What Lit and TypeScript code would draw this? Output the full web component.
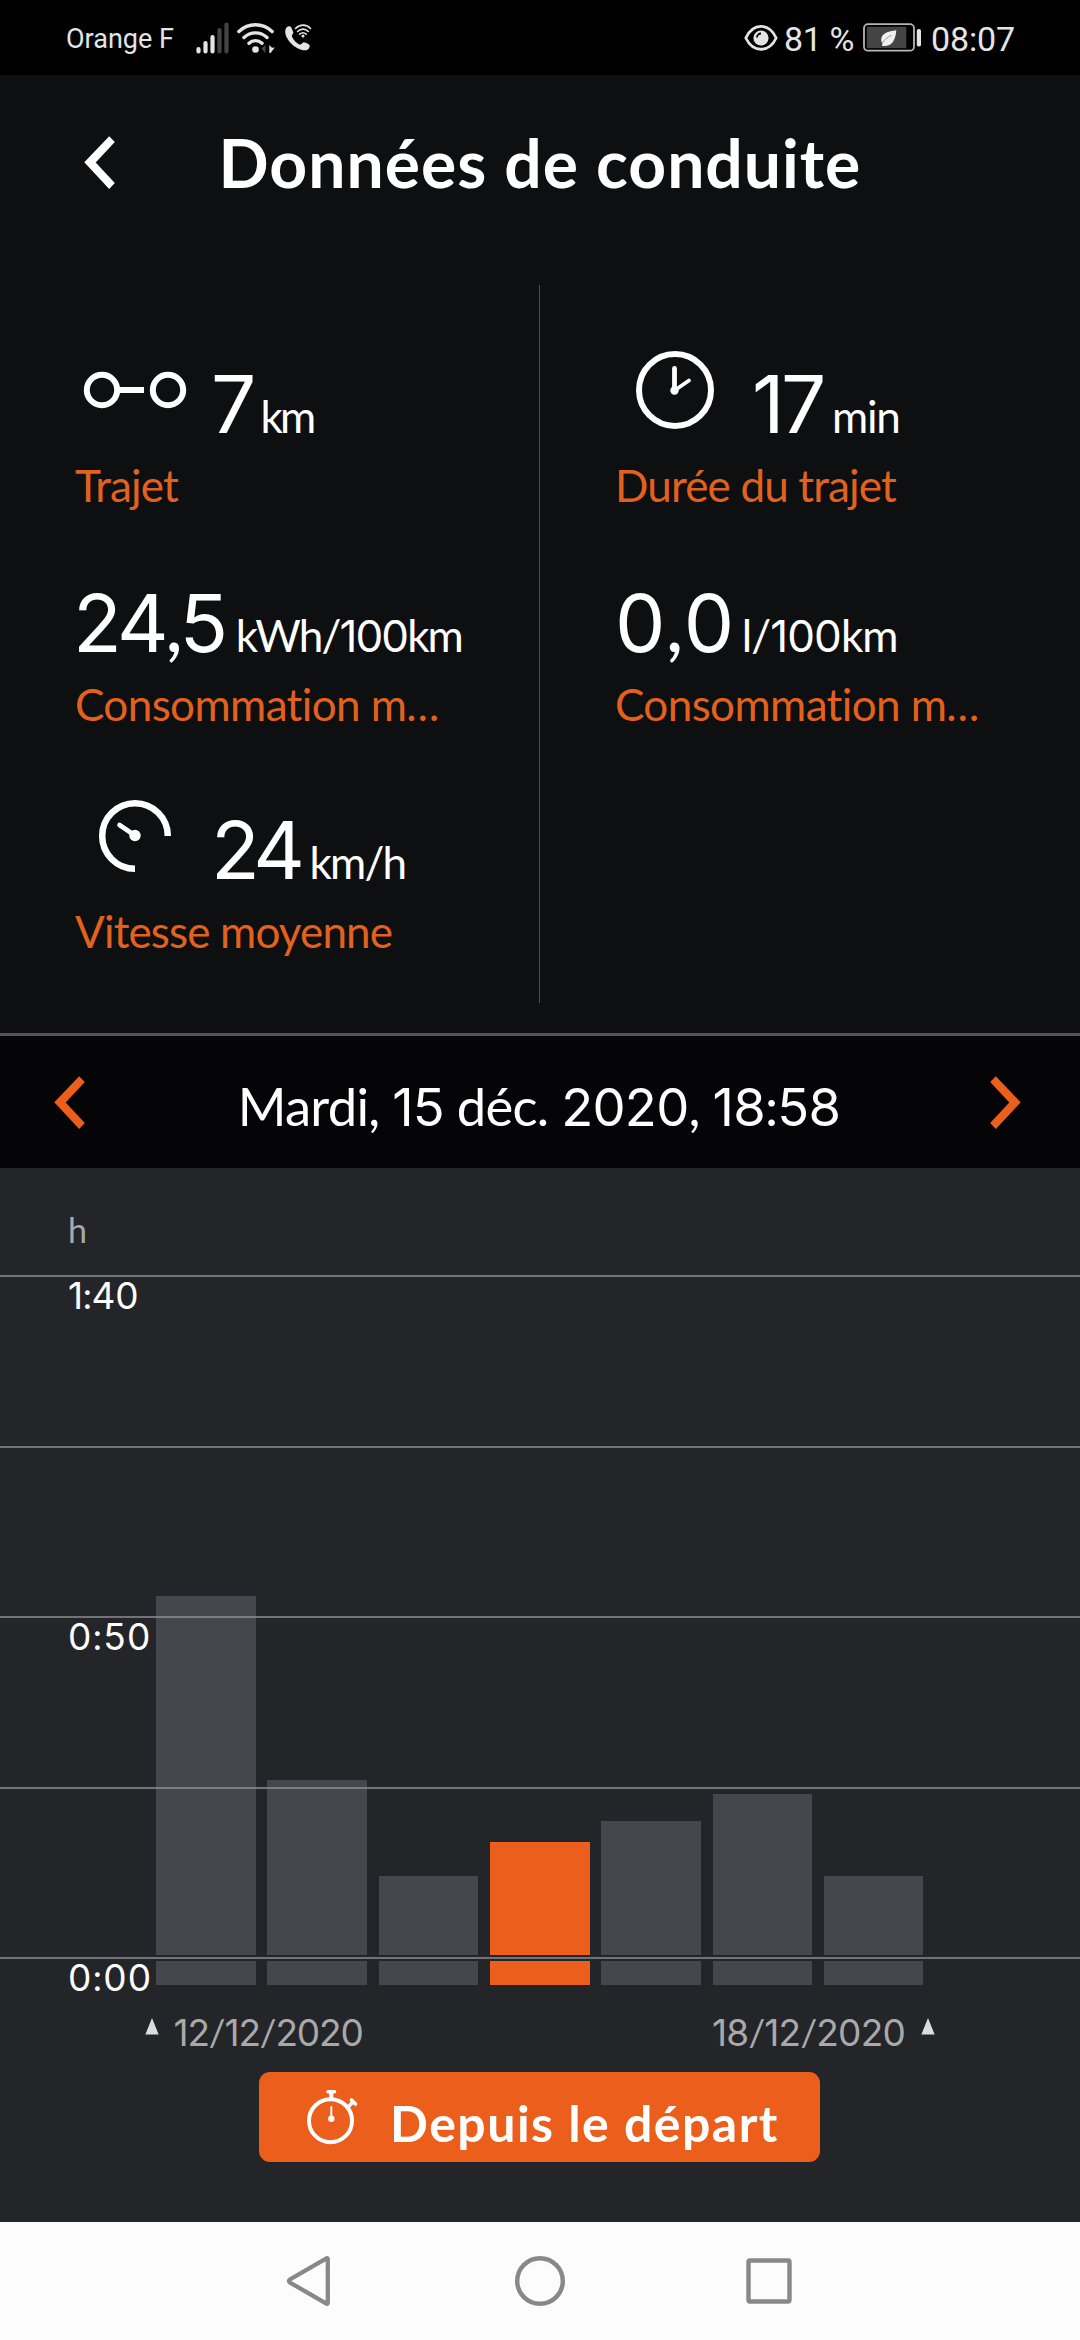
import { LitElement, html, css, svg } from "lit";
import { customElement } from "lit/decorators.js";
import { classMap } from "lit/directives/class-map.js";

interface Metric {
  id: string;
  value: string;
  unit: string;
  label: string;
  icon?: "route" | "clock" | "gauge";
}

const LEFT: Metric[] = [
  { id: "distance", value: "7", unit: "km", label: "Trajet", icon: "route" },
  { id: "energy", value: "24,5", unit: "kWh/100km", label: "Consommation m…" },
  { id: "speed", value: "24", unit: "km/h", label: "Vitesse moyenne", icon: "gauge" },
];

const RIGHT: Metric[] = [
  { id: "duration", value: "17", unit: "min", label: "Durée du trajet", icon: "clock" },
  { id: "fuel", value: "0,0", unit: "l/100km", label: "Consommation m…" },
];

/** Trip durations in minutes; one bar each. */
const TRIPS = [53, 26, 12, 17, 20, 24, 12];
const SELECTED = 3;
const PX_PER_MINUTE = 6.82;

const AXIS = ["1:40", "", "0:50", "", "0:00"];

const ICONS = {
  route: svg`<g fill="none" stroke="#fff" stroke-width="6">
    <circle cx="26" cy="33" r="15.2"/><circle cx="92" cy="33" r="15.2"/><path d="M41 33H68"/></g>`,
  clock: svg`<g fill="none" stroke="#fff" stroke-linecap="round">
    <circle cx="59" cy="33" r="36" stroke-width="6"/>
    <path d="M58.5 11.5V33" stroke-width="4.8"/><path d="M58.5 33.5L73 23.5" stroke-width="3.8"/>
    <circle cx="58.5" cy="33.5" r="4.2" fill="#fff" stroke="none"/></g>`,
  gauge: svg`<g fill="none" stroke="#fff">
    <path d="M91.8 33A32.8 32.8 0 1 0 59 65.8" stroke-width="6.5"/>
    <path d="M43.5 22L59 32.5" stroke-width="4.6" stroke-linecap="round"/>
    <circle cx="59" cy="32.5" r="5.7" fill="#fff" stroke="none"/></g>`,
};

const CHEVRON_LEFT = "M0.3 26.3L25.2 0.3L30.8 6L11.7 26.5L30.8 47L25.2 53Z";
const CHEVRON_RIGHT = "M30.7 26.3L5.8 0.3L0.2 6L19.3 26.5L0.2 47L5.8 53Z";
const MARKER = svg`<path d="M7 0L13.7 16.5H0.3Z" fill="#ddd"/>`;

/** Digits use their own family so that the 1 has no foot. */
const mixed = (text: string) =>
  text.split(/(\d+)/).filter(Boolean).map((run) => (/\d/.test(run) ? html`<span class="num">${run}</span>` : run));

@customElement("app-root")
export class AppRoot extends LitElement {
  static styles = css`
    :host {
      display: flex;
      flex-direction: column;
      width: 1080px;
      height: 2340px;
      overflow: hidden;
      background: #0e0f11;
      color: #fff;
      font-family: Lato, "Liberation Sans", sans-serif;
      white-space: nowrap;
    }
    svg { display: block; flex: none; overflow: visible; }
    .num { font-family: Inter, sans-serif; line-height: 0; }

    .status {
      display: flex;
      align-items: center;
      height: 75px;
      box-sizing: border-box;
      padding: 0 65px 0 66px;
      background: #000;
      color: #e4e4e4;
      font: 27px/40px Roboto, sans-serif;
    }
    .status span { padding-top: 2px; }
    .signal { margin-left: 22.5px; }
    .wifi { margin-left: 8px; }
    .call { margin-left: 10px; }
    .status .right { display: flex; align-items: center; margin-left: auto; font-size: 34px; }
    .battery-level { margin-left: 6px; letter-spacing: -0.38px; }
    .battery { margin-left: 9px; }
    .time { margin-left: 9px; letter-spacing: -0.14px; }

    .header { display: flex; height: 210px; box-sizing: border-box; padding: 47px 0 0 84px; }
    .header svg { margin-top: 14px; }
    h1 { margin: 1px 0 0 103.6px; font-size: 66px; font-weight: 700; line-height: 80px; letter-spacing: 1px; }

    .stats { display: flex; height: 718px; }
    .column {
      display: grid;
      grid-template-rows: 219px 227px 1fr;
      width: 540px;
      box-sizing: border-box;
      padding: 72px 0 0 75px;
    }
    .column:first-child { border-right: 1px solid #4d4e50; }
    .reading { display: flex; align-items: baseline; height: 90px; line-height: 90px; }
    .reading svg { align-self: flex-start; margin-left: 1px; }
    .value { font-size: 80px; }
    .unit { font-size: 44px; }
    .label { margin-top: 8px; font-size: 44px; line-height: 60px; color: #e2611f; letter-spacing: -0.85px; }

    .distance .unit { margin-left: 4.2px; letter-spacing: -2.7px; }
    .duration svg { margin-right: 1px; }
    .duration .value { letter-spacing: -3.5px; }
    .duration .unit { margin-left: 9.3px; letter-spacing: -1.3px; }
    .energy .value { margin-left: -2px; letter-spacing: -3.66px; }
    .energy .unit { margin-left: 11.4px; letter-spacing: -1.9px; }
    .fuel .unit { margin-left: 7.6px; letter-spacing: -0.9px; }
    .speed .value { letter-spacing: -5.3px; }
    .speed .unit { margin-left: 9.9px; letter-spacing: -1.8px; }
    .energy .label, .fuel .label { letter-spacing: -0.6px; }

    .trip {
      display: flex;
      align-items: center;
      justify-content: space-between;
      height: 132px;
      margin-top: 30px;
      padding: 0 59px 0 54px;
      border-top: 3px solid #555556;
      background: #050507;
    }
    .trip-date { padding: 7px 0 0 3px; font-size: 52.5px; letter-spacing: -0.72px; }

    .chart { display: flex; flex-direction: column; height: 1054px; background: #242529; }
    .unit-row { height: 107px; padding-left: 68px; box-sizing: border-box; font-size: 34px; line-height: 124px; color: #a9a9aa; }
    .plot { display: grid; height: 710px; }
    .plot > * { grid-area: 1 / 1; }
    .bars { display: flex; align-items: flex-end; gap: 11.73px; padding-left: 156px; }
    .bar { display: flex; flex-direction: column; gap: 6px; width: 99.6px; }
    .bar i { display: block; background: #45474f; }
    .bar .foot { height: 24px; }
    .bar.selected i { background: #ec5e1b; }
    .grid { display: grid; grid-template-rows: repeat(5, 170.5px); height: 710px; }
    .grid div { border-top: 2px solid rgba(145, 148, 152, 0.7); padding-left: 68px; font-size: 37px; line-height: 35px; letter-spacing: 1.3px; }
    .grid div:first-child { letter-spacing: -0.35px; }

    .range { display: flex; justify-content: space-between; height: 87px; box-sizing: border-box; padding: 30px 145px 0 144.5px; font-size: 37px; line-height: 33px; color: #a9a9aa; }
    .range div { display: flex; gap: 15px; letter-spacing: -1.13px; }
    .range div:last-child { gap: 16px; letter-spacing: -0.79px; }
    .range svg { margin-top: 3px; }

    .reset {
      display: flex;
      width: 561px;
      height: 90px;
      margin-left: 259px;
      box-sizing: border-box;
      padding: 0 0 0 44px;
      border: 0;
      border-radius: 11px;
      background: #ec5e1b;
      color: #fff;
      font: 700 50px/103px Lato, sans-serif;
      letter-spacing: 1.48px;
    }
    .reset span { margin-left: 31px; }
    .nav { display: flex; justify-content: center; align-items: center; height: 118px; background: #fcfcfc; }
    .nav svg { margin: 0 85px; }
  `;

  private metric(m: Metric) {
    return html`<div class="metric ${m.id}">
      <div class="reading">
        ${m.icon ? html`<svg width="135" height="90" viewBox="0 0 135 90">${ICONS[m.icon]}</svg>` : ""}
        <span class="value">${mixed(m.value)}</span><span class="unit">${mixed(m.unit)}</span>
      </div>
      <div class="label">${m.label}</div>
    </div>`;
  }

  render() {
    return html`
      <div class="status">
        <span>Orange F</span>
        <svg class="signal" width="33" height="32" viewBox="0 0 33 32" stroke-width="4.2" stroke-linecap="round">
          <path stroke="#e4e4e4" d="M2.5 27V29.5M9.5 21V29.5M16.5 15V29.5"/><path stroke="#444" d="M23.5 8V29.5M30.5 2.5V29.5"/>
        </svg>
        <svg class="wifi" width="38" height="32" viewBox="0 0 38 32">
          <g fill="none" stroke="#e4e4e4" stroke-width="3.4" stroke-linecap="round">
            <path d="M1.9 9.5C11.5 0.5 25.5 0.5 35.1 9.5"/><path d="M7 15.5C13.5 9.3 23.5 9.3 30 15.5"/><path d="M12 21.3C15.8 17.7 21.2 17.7 25 21.3"/>
          </g>
          <circle cx="18.5" cy="27.5" r="3.3" fill="#e4e4e4"/>
          <path d="M28.5 23V31.5L24.3 26.5Z" fill="#444"/><path d="M32.3 23V31H33.5L37.8 25.5L35 25.8Z" fill="#e4e4e4"/>
        </svg>
        <svg class="call" width="27" height="28" viewBox="0 0 27 28">
          <path fill="#e4e4e4" d="M1.5 3.5C3 1.8 5.3 1.7 6.3 3.5L8.2 8C8.7 9.3 7 10.6 6.8 12C7.8 15.5 12 20 15.2 20.6C16.7 20.5 17.5 18.2 19 18.2C20.7 18.5 23.3 19.7 24.3 20.7C25.6 22.5 23.7 25.5 21.5 26.2C11 27.5 -1.5 14 0.4 6C0.6 5 1 4 1.5 3.5Z"/>
          <g fill="none" stroke="#e4e4e4" stroke-width="1.6" stroke-linecap="round">
            <path d="M10.5 4.5C15 0 21.5 0 25.5 4.5"/><path d="M12.6 7.5C16 4.3 20.3 4.3 23.3 7.5"/><path d="M14.7 10.2C17 8.2 19 8.2 21.2 10.2"/>
          </g>
          <circle cx="18" cy="12" r="1.5" fill="#e4e4e4"/>
        </svg>
        <div class="right">
          <svg width="34" height="28" viewBox="0 0 34 28">
            <path d="M1.8 14C9 -1.5 25 -1.5 32.2 14C25 29 9 29 1.8 14Z" fill="none" stroke="#e4e4e4" stroke-width="2.8" stroke-linejoin="round"/>
            <circle cx="17" cy="14" r="7.6" fill="#e4e4e4"/><path d="M13 13.5A4 4 0 0 1 17 9.5" fill="none" stroke="#000" stroke-width="1.8"/>
          </svg>
          <span class="battery-level">81 %</span>
          <svg class="battery" width="59" height="29" viewBox="0 0 59 29">
            <rect x="1" y="1.2" width="50" height="26.5" rx="4" fill="none" stroke="#b5b5b5" stroke-width="1.8"/>
            <rect x="3.8" y="3.8" width="39.5" height="21.3" fill="#444"/>
            <rect x="53.8" y="6" width="4.2" height="17.5" rx="1.8" fill="#e4e4e4"/>
            <path d="M33.3 7.2C25 8.2 18.3 10.5 18.2 16.5C18.2 18.2 18.7 19.5 19.5 20.2C18.9 21.5 19 22.5 19.2 22.7C26 23.7 32.3 21 33.3 7.2Z" fill="#f0f0f0"/>
            <path d="M19.2 20.5C21 16.8 24.5 14 28.5 12.3" stroke="#888" stroke-width="0.8" fill="none"/>
          </svg>
          <span class="time">08:07</span>
        </div>
      </div>

      <div class="header">
        <svg width="31" height="53" viewBox="0 0 31 53"><path d=${CHEVRON_LEFT} fill="#fff"/></svg>
        <h1>Données de conduite</h1>
      </div>

      <div class="stats">
        <div class="column">${LEFT.map((m) => this.metric(m))}</div>
        <div class="column">${RIGHT.map((m) => this.metric(m))}</div>
      </div>

      <div class="trip">
        <svg width="31" height="53" viewBox="0 0 31 53"><path d=${CHEVRON_LEFT} fill="#ec5e1b"/></svg>
        <div class="trip-date">${mixed("Mardi, 15 déc. 2020, 18:58")}</div>
        <svg width="31" height="53" viewBox="0 0 31 53"><path d=${CHEVRON_RIGHT} fill="#ec5e1b"/></svg>
      </div>

      <div class="chart">
        <div class="unit-row">h</div>
        <div class="plot">
          <div class="bars">
            ${TRIPS.map((min, i) => html`<div class=${classMap({ bar: true, selected: i === SELECTED })}>
              <i style="height:${Math.round(min * PX_PER_MINUTE - 2.5)}px"></i><i class="foot"></i>
            </div>`)}
          </div>
          <div class="grid">${AXIS.map((t) => html`<div>${mixed(t)}</div>`)}</div>
        </div>
        <div class="range">
          <div><svg width="14" height="17" viewBox="0 0 14 17">${MARKER}</svg><span>${mixed("12/12/2020")}</span></div>
          <div><span>${mixed("18/12/2020")}</span><svg width="14" height="17" viewBox="0 0 14 17">${MARKER}</svg></div>
        </div>
        <button class="reset">
          <svg width="56" height="90" viewBox="0 0 56 90">
            <g fill="none" stroke="#fff" stroke-linecap="round">
              <circle cx="27.5" cy="48.7" r="21.5" stroke-width="4"/>
              <path d="M25 19.8H31.5" stroke-width="3.6"/><path d="M28.3 20V27" stroke-width="4" stroke-linecap="butt"/>
              <path d="M44 36L50 30" stroke-width="3.6" stroke-linecap="butt"/><path d="M48.5 28L52.5 32" stroke-width="3.6"/>
              <path d="M28.3 35V46" stroke-width="2"/>
            </g>
            <circle cx="28.3" cy="46.8" r="3.2" fill="#fff"/>
          </svg>
          <span>Depuis le départ</span>
        </button>
      </div>

      <div class="nav">
        <svg width="60" height="60" viewBox="0 0 60 60"><path d="M47.8 8.5V51.5Q47.8 53.5 46 52.4L9.9 31.5Q8 30 9.9 28.5L46 7.6Q47.8 6.5 47.8 8.5Z" fill="none" stroke="#888" stroke-width="4.3"/></svg>
        <svg width="60" height="60" viewBox="0 0 60 60"><circle cx="30" cy="30" r="22.8" fill="none" stroke="#888" stroke-width="4.4"/></svg>
        <svg width="60" height="60" viewBox="0 0 60 60"><rect x="8.5" y="9.5" width="41" height="41" rx="1.5" fill="none" stroke="#888" stroke-width="4.4"/></svg>
      </div>
    `;
  }
}
